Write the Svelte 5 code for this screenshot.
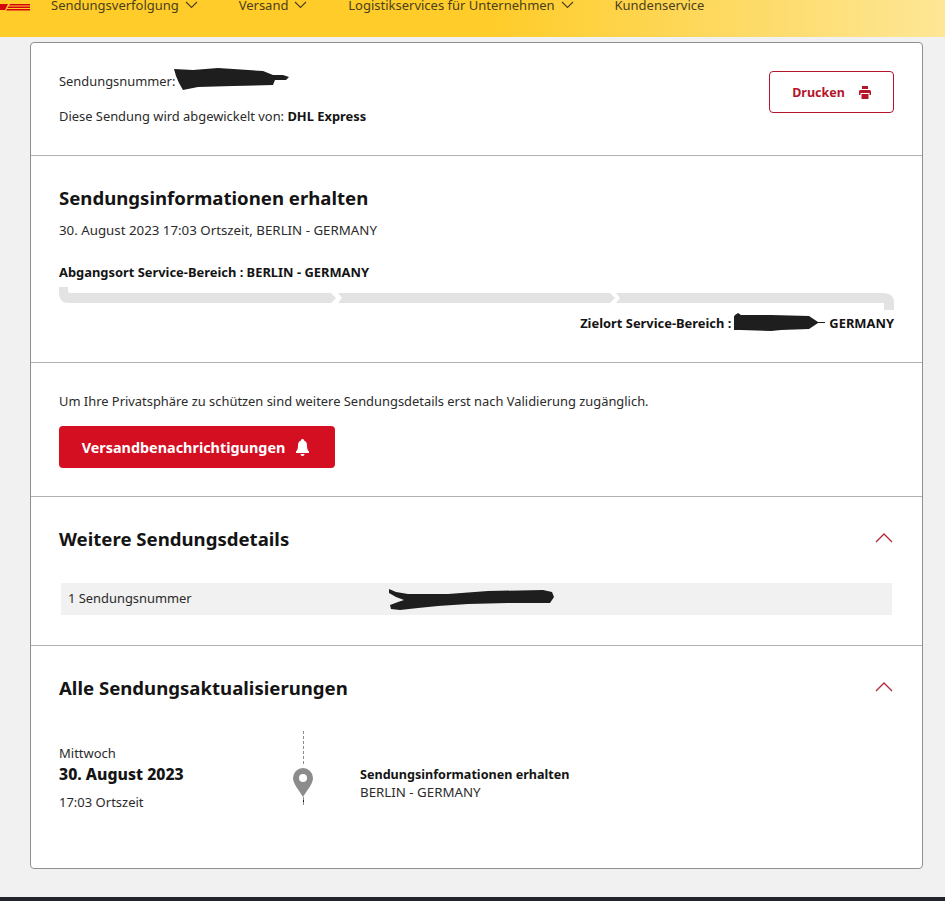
<script>
  const nav = [
    { label: "Sendungsverfolgung", chevron: true },
    { label: "Versand", chevron: true },
    { label: "Logistikservices für Unternehmen", chevron: true },
    { label: "Kundenservice", chevron: false },
  ];
</script>

<header class="topbar">
  <svg class="logo" width="31" height="16" viewBox="0 0 31 16" aria-hidden="true">
    <path d="M0 9h8l-3 6H0z" fill="#d40511" />
    <path d="M10 9h20v1.500H9zM8.500 11.500H30V13H7.500zM7 14h23v1.500H6z" fill="#d40511" />
  </svg>
  <nav class="menu">
    {#each nav as item}
      <span class="menu-item">
        {item.label}
        {#if item.chevron}
          <svg width="13" height="8" viewBox="0 0 13 8" aria-hidden="true">
            <path d="M1 1l5.500 5.500L12 1" fill="none" stroke="#4a3f1c" stroke-width="1.100" />
          </svg>
        {/if}
      </span>
    {/each}
  </nav>
</header>

<main class="page">
  <div class="card">
    <section class="sec sec-head">
      <div class="head-text">
        <p class="num-line">
          Sendungsnummer:
          <svg class="scribble s1" width="118" height="24" viewBox="0 0 118 24" aria-hidden="true">
            <path d="M1 1L20 2 45 0 90 3 100 7 110 7 116 9 113 12 102 12 100 17 60 18 25 19 10 22 6 15 3 8z" fill="#1e1e1e" />
          </svg>
        </p>
        <p class="by-line">Diese Sendung wird abgewickelt von: <strong>DHL Express</strong></p>
      </div>
      <button class="btn-print">
        Drucken
        <svg width="12" height="13" viewBox="0 0 12 13" aria-hidden="true">
          <path d="M3 0h6v3H3zM1.500 4h9A1.500 1.500 0 0 1 12 5.500V9h-1.500V7h-9v2H0V5.500A1.500 1.500 0 0 1 1.500 4zM2.500 8h7v5h-7z" fill="#b5152b" />
        </svg>
      </button>
    </section>

    <section class="sec sec-info">
      <h2>Sendungsinformationen erhalten</h2>
      <p class="when">30. August 2023 17:03 Ortszeit, BERLIN - GERMANY</p>
      <p class="origin">Abgangsort Service-Bereich : BERLIN - GERMANY</p>
      <svg class="progress" width="835" height="24" viewBox="0 0 835 24" aria-hidden="true">
        <path d="M0 1h9v4q0 2 2 2h261l5 5-5 5H10Q0 17 0 7z" fill="#e3e3e3" />
        <path d="M279 7h272l5 5-5 5H279l4-5z" fill="#e3e3e3" />
        <path d="M557 7h268q10 0 10 10v7h-10v-7H557l4-5z" fill="#e3e3e3" />
      </svg>
      <p class="dest">
        Zielort Service-Bereich :
        <svg class="scribble s2" width="92" height="20" viewBox="0 0 92 20" aria-hidden="true">
          <path d="M1 2l3-2 3 2 30 0 38 1 9 6 7 0v1l-7 0-9 6-28 1-10 1-30-1-16 0z" fill="#1e1e1e" />
        </svg>
        GERMANY
      </p>
    </section>

    <section class="sec sec-privacy">
      <p class="privacy">Um Ihre Privatsphäre zu schützen sind weitere Sendungsdetails erst nach Validierung zugänglich.</p>
      <button class="btn-notify">
        Versandbenachrichtigungen
        <svg width="13" height="17" viewBox="0 0 13 17" aria-hidden="true">
          <path d="M6.500 0A1.500 1.500 0 0 1 8 1.600C10.300 2.300 11 4.300 11 6.500c0 3 .6 4.700 2 6.100V14H0v-1.400c1.400-1.400 2-3.100 2-6.100 0-2.200.7-4.200 3-4.900A1.500 1.500 0 0 1 6.500 0zM4.500 15h4a2 2 0 0 1-4 0z" fill="#fff" />
        </svg>
      </button>
    </section>

    <section class="sec sec-details">
      <div class="sec-title">
        <h2>Weitere Sendungsdetails</h2>
        <svg class="caret" width="18" height="11" viewBox="0 0 18 11" aria-hidden="true">
          <path d="M1 10l8-8 8 8" fill="none" stroke="#b5283c" stroke-width="1.300" />
        </svg>
      </div>
      <div class="piece">
        <span class="piece-label">1 Sendungsnummer</span>
        <svg class="scribble" width="167" height="22" viewBox="0 0 167 22" aria-hidden="true">
          <path d="M1 1L8 4 20 6 60 6 100 3 155 2 164 4 166 9 162 15 120 15 80 16 50 18 30 20 12 22 3 21 2 17 10 14 16 12 8 9 1 5z" fill="#1e1e1e" />
        </svg>
      </div>
    </section>

    <section class="sec sec-updates">
      <div class="sec-title">
        <h2>Alle Sendungsaktualisierungen</h2>
        <svg class="caret" width="18" height="11" viewBox="0 0 18 11" aria-hidden="true">
          <path d="M1 10l8-8 8 8" fill="none" stroke="#b5283c" stroke-width="1.300" />
        </svg>
      </div>
      <div class="event">
        <div class="event-date">
          <span class="weekday">Mittwoch</span>
          <strong>30. August 2023</strong>
          <span class="time">17:03 Ortszeit</span>
        </div>
        <div class="event-pin">
          <span class="dash top"></span>
          <svg width="20" height="29" viewBox="0 0 20 29" aria-hidden="true">
            <path fill-rule="evenodd" d="M10 0a10 10 0 0 1 10 10c0 6-6 12-10 19C6 22 0 16 0 10A10 10 0 0 1 10 0zm0 6a4 4 0 1 0 0 8 4 4 0 0 0 0-8z" fill="#8c8c8c" />
          </svg>
          <span class="dash bottom"></span>
        </div>
        <div class="event-text">
          <strong>Sendungsinformationen erhalten</strong>
          <span>BERLIN - GERMANY</span>
        </div>
      </div>
    </section>
  </div>
</main>

<footer class="bottom"></footer>

<style>
  :global(body) {
    background: #f1f1f1;
    font-family: "Noto Sans", "Open Sans", sans-serif;
    color: #2b2b2b;
  }

  p, h2 { margin: 0; }
  button { font-family: inherit; cursor: pointer; }

  /* --- top bar, scrolled so the nav text is cut off --- */
  .topbar {
    height: 37px;
    position: relative;
    overflow: hidden;
    background: linear-gradient(to right, #ffcc29 0, #ffcc29 52%, #fde696 100%);
  }
  .logo { position: absolute; left: 0; top: -5px; }
  .menu {
    display: flex;
    margin: -5px 0 0 51px;
    font-size: 13px;
    line-height: 20px;
    color: #4a3f1c;
    gap: 40.800px;
  }
  .menu-item {
    display: flex;
    align-items: center;
    gap: 6px;
    white-space: nowrap;
  }

  .page { padding: 5px 22px 28px 30px; }

  .card {
    background: #fff;
    border: 1px solid #8f8f8f;
    border-radius: 4px;
    box-sizing: content-box;
    width: 891px;
    height: 825px;
    display: flex;
    flex-direction: column;
  }

  .sec { padding: 0 28px; border-bottom: 1px solid #b0b0b0; box-sizing: border-box; }
  .sec:last-child { border-bottom: 0; flex: 1; }

  h2 {
    font-size: 18.600px;
    font-weight: 700;
    color: #141414;
    line-height: 24px;
  }

  .sec-head {
    height: 113px;
    display: flex;
    justify-content: space-between;
    padding-top: 28px;
  }
  .num-line, .by-line, .privacy {
    font-size: 12.900px;
    line-height: 18px;
  }
  .num-line { display: flex; align-items: center; gap: 3px; height: 20px; }
  .by-line { margin-top: 16px; }
  .by-line strong { color: #141414; }
  .s1 { margin-top: -3px; margin-left: -5px; }

  .btn-print {
    width: 125px;
    height: 42px;
    display: flex;
    align-items: center;
    justify-content: center;
    gap: 14px;
    background: #fff;
    border: 1px solid #b5152b;
    border-radius: 4px;
    color: #b5152b;
    font-size: 12.500px;
    font-weight: 700;
  }

  .sec-info { height: 207px; padding-top: 30px; }
  .when { margin-top: 11px; font-size: 13.300px; line-height: 18px; }
  .origin, .dest {
    font-size: 12.900px;
    line-height: 18px;
    font-weight: 700;
    color: #141414;
  }
  .origin { margin-top: 24px; }
  .progress { display: block; margin-top: 5px; }
  .dest {
    display: flex;
    justify-content: flex-end;
    align-items: center;
    gap: 3px;
    margin-top: 3px;
  }

  .sec-privacy { height: 134px; padding-top: 29px; }
  .btn-notify {
    margin-top: 16px;
    width: 276px;
    height: 42px;
    padding: 0 3px 0 0;
    display: flex;
    align-items: center;
    justify-content: center;
    gap: 11px;
    background: #d40f22;
    border: 0;
    border-radius: 4px;
    color: #fff;
    font-size: 14.400px;
    font-weight: 700;
  }

  .sec-details { height: 149px; padding-top: 29px; }
  .sec-title {
    display: flex;
    justify-content: space-between;
    align-items: center;
    height: 26px;
  }
  .caret { margin-right: 1px; margin-top: -4px; }
  .piece {
    margin: 31px 2px 0;
    height: 32px;
    background: #f1f1f1;
    display: flex;
    align-items: center;
    padding-left: 7px;
    font-size: 12.900px;
  }
  .piece-label { width: 320px; padding-bottom: 2px; }

  .sec-updates { padding-top: 29px; }
  .event { display: flex; margin-top: 30px; }
  .event-date {
    width: 234px;
    display: flex;
    flex-direction: column;
    padding-top: 14px;
    font-size: 13px;
    line-height: 17px;
  }
  .event-date strong {
    font-size: 15.800px;
    font-weight: 800;
    line-height: 24px;
    color: #141414;
  }
  .event-date .time { margin-top: 8px; }
  .event-pin {
    width: 20px;
    display: flex;
    flex-direction: column;
    align-items: center;
  }
  .dash { display: block; width: 0; border-left: 1px dashed #8c8c8c; }
  .dash.top { height: 33px; margin-bottom: 4px; }
  .dash.bottom { height: 8px; }
  .event-text {
    margin-left: 47px;
    padding-top: 35px;
    display: flex;
    flex-direction: column;
    font-size: 13.300px;
    line-height: 17px;
  }
  .event-text strong { color: #141414; font-size: 12.600px; line-height: 18px; }

  .bottom { height: 4px; background: #22242a; }
</style>
